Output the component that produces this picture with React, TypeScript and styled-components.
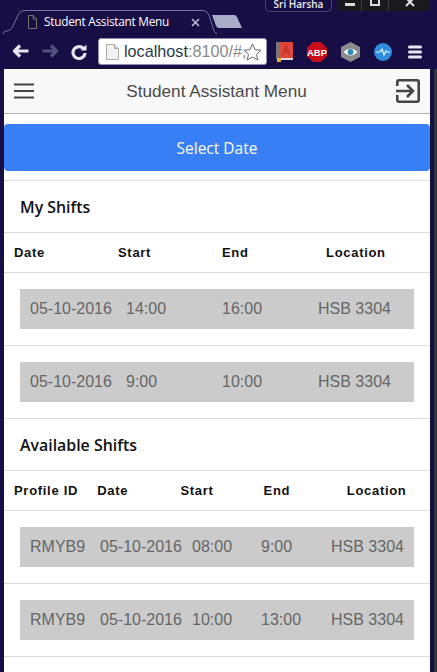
import React from 'react';
import styled, { createGlobalStyle } from 'styled-components';

const GlobalStyle = createGlobalStyle`
  html, body {
    margin: 0;
    height: 672px;
    overflow: hidden;
    background: #160e45;
    font-family: "Liberation Sans", Arial, sans-serif;
  }
`;

const TabStrip = styled.div`
  position: relative;
  height: 34px;
  display: flex;
  justify-content: flex-end;
  align-items: flex-start;
  gap: 6px;
  padding-right: 7px;
`;

const TabOutline = styled.svg`
  position: absolute;
  left: 0;
  top: 0;
`;

const TabTitle = styled.span`
  position: absolute;
  left: 44px;
  top: 13px;
  font: 11.8px/17px "Open Sans", sans-serif;
  letter-spacing: -0.25px;
  color: #fff;
  white-space: nowrap;
`;

const UserBadge = styled.div`
  width: 65px;
  height: 11px;
  border: 1px solid #4a4570;
  border-top: none;
  border-radius: 0 0 5px 5px;
  text-align: center;
  font: 600 10px/9px "Open Sans", sans-serif;
  color: #eee;
`;

const WindowControls = styled.div`
  width: 92px;
  height: 11px;
  display: grid;
  grid-template-columns: 23px 27px 1fr;
  background: #1a1a1d;
  border-radius: 0 0 4px 4px;
`;

const WindowButton = styled.div`
  display: flex;
  justify-content: center;
  overflow: hidden;
  & + & {
    border-left: 1px solid #3c3c42;
  }
`;

const Toolbar = styled.div`
  height: 35px;
  display: flex;
  align-items: center;
  padding-left: 13px;
`;

const NavIcons = styled.div`
  display: flex;
  gap: 13px;
  width: 85px;
`;

const UrlBox = styled.div`
  width: 169px;
  height: 27px;
  box-sizing: border-box;
  display: flex;
  align-items: center;
  gap: 5px;
  padding-left: 7px;
  background: #fff;
  border: 1px solid #8f8fb5;
  border-radius: 3px;
  overflow: hidden;
  position: relative;
`;

const UrlText = styled.span`
  font-size: 16.2px;
  color: #2d3a48;
  white-space: nowrap;
`;

const UrlFaded = styled.span`
  color: #8a8a8a;
`;

const StarIcon = styled.svg`
  position: absolute;
  right: 4px;
  top: 4px;
`;

const Extensions = styled.div`
  display: flex;
  align-items: center;
  margin-left: 9px;
  gap: 14px;
`;

const Shell = styled.div`
  display: flex;
  height: 603px;
  padding-left: 4px;
`;

const Page = styled.main`
  width: 426px;
  background: #fff;
  overflow: hidden;
`;

const EdgeStrip = styled.div`
  width: 3px;
  margin-left: 4px;
  background: #2d3a3c;
`;

const AppBar = styled.header`
  height: 44px;
  display: flex;
  align-items: center;
  justify-content: space-between;
  padding: 0 10px;
  background: #f8f8f8;
  border-bottom: 1px solid #b2b2b2;
`;

const AppTitle = styled.h1`
  margin: 0 0 0 3px;
  font-size: 17.2px;
  font-weight: 400;
  color: #4a4a4a;
`;

const IconSlot = styled.svg`
  display: block;
`;

const SelectButton = styled.button`
  display: block;
  width: 100%;
  height: 47px;
  margin: 10px 0 9px;
  border: none;
  border-radius: 4px;
  background: #387ef5;
  color: #fff;
  font: 15.5px "Open Sans", sans-serif;
`;

const SectionTitle = styled.h2`
  margin: 0;
  height: 52px;
  box-sizing: border-box;
  border-top: 1px solid #ddd;
  padding-left: 16px;
  font: 600 15.9px/53px "Open Sans", sans-serif;
  color: #111;
`;

const HeadRow = styled.div<{ $cols: number; $width: number }>`
  height: 39px;
  display: grid;
  grid-template-columns: repeat(${p => p.$cols}, ${p => p.$width}px);
  align-items: center;
  padding-left: 10px;
  border-top: 1px solid #ddd;
  font-size: 13px;
  font-weight: 700;
  letter-spacing: 0.7px;
  color: #111;
  white-space: nowrap;
`;

const RowWrap = styled.div`
  padding: 16px;
  border-top: 1px solid #ddd;
`;

const ShiftRow = styled.div<{ $columns: string }>`
  height: 40px;
  display: grid;
  grid-template-columns: ${p => p.$columns};
  align-items: center;
  padding-left: 10px;
  background: #cbcbcb;
  font-size: 16px;
  color: #666;
  white-space: nowrap;
`;

const ClosingLine = styled.div`
  border-top: 1px solid #ddd;
`;

const MY_COLUMNS = 'repeat(4, 96px)';
const AVAILABLE_COLUMNS = '70px 92px 69px 70px 1fr';

const myShifts = [
  ['05-10-2016', '14:00', '16:00', 'HSB 3304'],
  ['05-10-2016', '9:00', '10:00', 'HSB 3304'],
];

const availableShifts = [
  ['RMYB9', '05-10-2016', '08:00', '9:00', 'HSB 3304'],
  ['RMYB9', '05-10-2016', '10:00', '13:00', 'HSB 3304'],
];

function ShiftRows({ rows, columns }: { rows: string[][]; columns: string }) {
  return (
    <>
      {rows.map((row, i) => (
        <RowWrap key={i}>
          <ShiftRow $columns={columns}>
            {row.map((cell, j) => (
              <span key={j}>{cell}</span>
            ))}
          </ShiftRow>
        </RowWrap>
      ))}
    </>
  );
}

function BrowserChrome() {
  return (
    <>
      <TabStrip>
        <TabOutline width="250" height="34" viewBox="0 0 250 34">
          <path d="M3.5 34V33Q3.5 31 7 31Q11 31 13 26L18 15Q20 10.5 24 10.5H203Q207 10.5 209 15L213 28Q214 32 217 34" fill="none" stroke="#77749a" />
          <path d="M28.5 15.5H33L36.5 19V28.5H28.5Z M33 15.5V19H36.5" fill="none" stroke="#77756a" />
          <path d="M192 19L199 26M199 19L192 26" stroke="#b9b8cc" strokeWidth="1.6" />
          <path d="M212 15H234Q236 15 237 17L242 28H219Q217 28 216 26Z" fill="#a9acc6" />
        </TabOutline>
        <TabTitle>Student Assistant Menu</TabTitle>
        <UserBadge>Sri Harsha</UserBadge>
        <WindowControls>
          <WindowButton>
            <svg width="12" height="11"><rect x="1" y="3" width="10" height="3" fill="#ddd" /></svg>
          </WindowButton>
          <WindowButton>
            <svg width="12" height="11"><rect x="2" y="-4" width="8" height="9" fill="none" stroke="#ddd" strokeWidth="2" /></svg>
          </WindowButton>
          <WindowButton>
            <svg width="12" height="11"><path d="M2 -2L10 6M10 -2L2 6" stroke="#ddd" strokeWidth="2" /></svg>
          </WindowButton>
        </WindowControls>
      </TabStrip>
      <Toolbar>
        <NavIcons>
          <svg width="16" height="14" viewBox="0 0 16 14"><path d="M7 1.5L1.5 7L7 12.5M2 7H15.5" fill="none" stroke="#e4e4ee" strokeWidth="3.2" strokeLinejoin="round" /></svg>
          <svg width="16" height="14" viewBox="0 0 16 14"><path d="M9 1.5L14.5 7L9 12.5M14 7H0.5" fill="none" stroke="#56527e" strokeWidth="3.2" strokeLinejoin="round" /></svg>
          <svg width="16" height="16" viewBox="0 0 16 16"><path d="M13 5.2A6 6 0 1 0 14 9" fill="none" stroke="#e4e4ee" strokeWidth="3.2" /><path d="M9.5 6.5H15.5V0.5Z" fill="#e4e4ee" /></svg>
        </NavIcons>
        <UrlBox>
          <svg width="13" height="16" viewBox="0 0 13 16"><path d="M0.5 0.5H8.5L12.5 4.5V15.5H0.5Z" fill="#f2f2f2" stroke="#aaa" /><path d="M8.5 0.5V4.5H12.5" fill="#ddd" stroke="#aaa" /></svg>
          <UrlText>localhost<UrlFaded>:8100/#,</UrlFaded></UrlText>
          <StarIcon width="19" height="18" viewBox="0 0 19 18"><path d="M9.5 1L12 6.6L18 7.2L13.5 11.3L14.8 17L9.5 14L4.2 17L5.5 11.3L1 7.2L7 6.6Z" fill="#fff" stroke="#666" /></StarIcon>
        </UrlBox>
        <Extensions>
          <svg width="17" height="20" viewBox="0 0 17 20">
            <rect x="0" y="0" width="3" height="17" fill="#777" />
            <rect x="3" y="0" width="14" height="16" fill="#e0473a" />
            <rect x="3" y="16" width="14" height="2" fill="#ddd" />
            <rect x="1" y="16" width="4" height="4" fill="#e3b23a" />
            <path d="M6.5 13L10 4L13.5 13M8 10H12" fill="none" stroke="#c0352a" strokeWidth="1.5" />
          </svg>
          <svg width="20" height="20" viewBox="0 0 20 20">
            <path d="M6 0H14L20 6V14L14 20H6L0 14V6Z" fill="#c70d1c" />
            <text x="10" y="13.5" textAnchor="middle" fontFamily="Liberation Sans" fontWeight="700" fontSize="9.5" fill="#fff">ABP</text>
          </svg>
          <svg width="19" height="20" viewBox="0 0 19 20">
            <path d="M9.5 0L19 5V15L9.5 20L0 15V5Z" fill="#8b8b8b" />
            <path d="M2.5 10Q9.5 3 16.5 10Q9.5 17 2.5 10Z" fill="#fff" />
            <circle cx="9.5" cy="10" r="3" fill="#2a8ab5" />
          </svg>
          <svg width="18" height="18" viewBox="0 0 18 18">
            <circle cx="9" cy="9" r="9" fill="#2f8ddd" />
            <path d="M2 9H6L8 6L10 12L12 8L13 9H16" fill="none" stroke="#e6f3ff" strokeWidth="1.2" />
          </svg>
          <svg width="14" height="14" viewBox="0 0 14 14" style={{ marginLeft: 2 }}>
            <path d="M1.5 2H12.5M1.5 7H12.5M1.5 12H12.5" stroke="#e8e8f0" strokeWidth="3" strokeLinecap="round" />
          </svg>
        </Extensions>
      </Toolbar>
    </>
  );
}

export default function App() {
  return (
    <>
      <GlobalStyle />
      <BrowserChrome />
      <Shell>
        <Page>
          <AppBar>
            <IconSlot width="20" height="16" viewBox="0 0 20 16">
              <path d="M0 1.5H20M0 8H20M0 14.5H20" stroke="#444" strokeWidth="2" />
            </IconSlot>
            <AppTitle>Student Assistant Menu</AppTitle>
            <IconSlot width="24" height="24" viewBox="0 0 24 24">
              <path d="M1.3 7V3Q1.3 1.3 3 1.3H21Q22.7 1.3 22.7 3V21Q22.7 22.7 21 22.7H3Q1.3 22.7 1.3 21V16" fill="none" stroke="#444" strokeWidth="2.6" />
              <path d="M0 12H16M11 6L17 12L11 18" fill="none" stroke="#444" strokeWidth="2.6" />
            </IconSlot>
          </AppBar>
          <SelectButton>Select Date</SelectButton>

          <SectionTitle>My Shifts</SectionTitle>
          <HeadRow $cols={4} $width={104}>
            <span>Date</span>
            <span>Start</span>
            <span>End</span>
            <span>Location</span>
          </HeadRow>
          <ShiftRows rows={myShifts} columns={MY_COLUMNS} />

          <SectionTitle>Available Shifts</SectionTitle>
          <HeadRow $cols={5} $width={83.2}>
            <span>Profile ID</span>
            <span>Date</span>
            <span>Start</span>
            <span>End</span>
            <span>Location</span>
          </HeadRow>
          <ShiftRows rows={availableShifts} columns={AVAILABLE_COLUMNS} />
          <ClosingLine />
        </Page>
        <EdgeStrip />
      </Shell>
    </>
  );
}
